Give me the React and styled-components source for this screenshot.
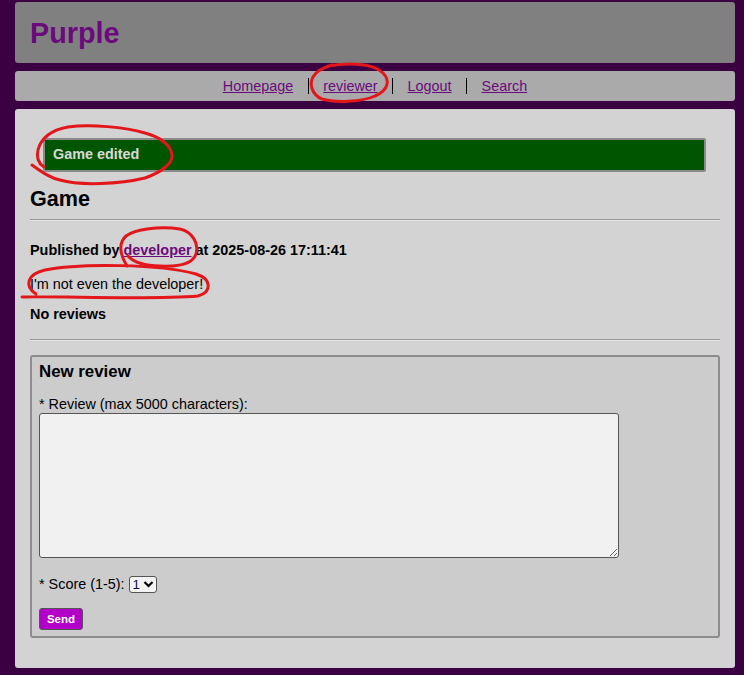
import React from "react";
import styled, { createGlobalStyle } from "styled-components";

const Global = createGlobalStyle`
  html, body { margin: 0; padding: 0; background: #3a0042; }
  body { font-family: "Liberation Sans", Arial, sans-serif; font-size: 14.4px; color: #000; }
  * { box-sizing: border-box; }
`;

const Page = styled.div`
  position: relative;
  min-height: 675px;
  padding: 2px 9px 8px 15px;
  display: flex;
  flex-direction: column;
  gap: 8px;
`;

const Header = styled.header`
  background: #808080;
  border-radius: 3px;
  padding: 15px 15px 13px;
`;

const Brand = styled.h1`
  margin: 0;
  font-size: 28.8px;
  font-weight: bold;
  color: #6b0a7d;
  line-height: normal;
`;

const Nav = styled.nav`
  background: #aaaaaa;
  border-radius: 3px;
  height: 30px;
  display: flex;
  align-items: center;
  justify-content: center;
`;

const NavItem = styled.a`
  font-size: 14.4px;
  color: #6b0a7d;
  text-decoration: underline;
  padding: 0 14.5px;
  line-height: 16.5px;
  border-left: ${(p) => (p.$first ? "none" : "1px solid #000")};
`;

const Main = styled.main`
  background: #d3d3d3;
  border-radius: 3px;
  padding: 15px;
  display: flex;
  flex-direction: column;
`;

const Flash = styled.div`
  margin: 14px 14px 0 13px;
  background: #005500;
  border: 2px solid #8a8a8a;
  border-radius: 2px;
  padding: 6px 8px 7px;
  color: #d9d9d9;
  font-weight: bold;
  font-size: 14.4px;
  line-height: 16.5px;
`;

const Title = styled.h2`
  margin: 14px 0 0;
  font-size: 21.6px;
  font-weight: bold;
  line-height: normal;
`;

const Rule = styled.hr`
  margin: ${(p) => p.$top}px 0 0;
  border: 0;
  border-top: 1px solid #9a9a9a;
  border-bottom: 1px solid #e2e2e2;
  height: 0;
`;

const Para = styled.p`
  margin: ${(p) => p.$top}px 0 0;
  font-weight: ${(p) => (p.$bold ? "bold" : "normal")};
  font-size: 14.4px;
  line-height: 16.5px;
`;

const UserLink = styled.a`
  color: #6b0a7d;
  text-decoration: underline;
`;

const Fieldset = styled.form`
  margin: 14px 0 15px;
  background: #cccccc;
  border: 2px solid #8c8c8c;
  border-radius: 3px;
  padding: 5px 7px 6px;
  display: flex;
  flex-direction: column;
  align-items: flex-start;
`;

const FormTitle = styled.h3`
  margin: 0;
  font-size: 16.85px;
  font-weight: bold;
  line-height: 19.4px;
`;

const Label = styled.label`
  margin-top: 15px;
  font-size: 14.4px;
  line-height: 16.5px;
  height: 17px;
`;

const TextArea = styled.textarea`
  width: 580px;
  height: 145px;
  background: #f1f1f1;
  border: 1px solid #555;
  border-radius: 3px;
  font-family: inherit;
  margin: 0;
  display: block;
`;

const ScoreRow = styled.div`
  margin-top: 18px;
  display: flex;
  align-items: center;
  gap: 4px;
  font-size: 14.4px;
  height: 17px;
`;

const SelectBox = styled.span`
  display: inline-flex;
  align-items: center;
  height: 17px;
  width: 28px;
  border: 1px solid #555;
  border-radius: 3px;
  background: #f3f3f3;
  padding: 0 2px 0 3px;
  gap: 1px;
`;

const Select = styled.select`
  appearance: none;
  border: 0;
  background: transparent;
  padding: 0;
  margin: 0;
  font-family: inherit;
  font-size: 13.3px;
  color: #0a0a50;
  width: 9px;
  outline: none;
`;

const SendButton = styled.button`
  margin-top: 15px;
  width: 44px;
  height: 22px;
  background: #b300c8;
  color: #fff;
  font-family: inherit;
  font-weight: bold;
  font-size: 11.5px;
  border: 1px solid #555;
  border-radius: 3px;
  padding: 0;
`;

const Marks = styled.svg`
  position: absolute;
  left: 0;
  top: 0;
  pointer-events: none;
`;

export default function App() {
  return (
    <>
      <Global />
      <Page>
        <Header>
          <Brand>Purple</Brand>
        </Header>
        <Nav>
          <NavItem $first href="#">Homepage</NavItem>
          <NavItem href="#">reviewer</NavItem>
          <NavItem href="#">Logout</NavItem>
          <NavItem href="#">Search</NavItem>
        </Nav>
        <Main>
          <Flash>Game edited</Flash>
          <Title>Game</Title>
          <Rule $top={7} />
          <Para $bold $top={21}>
            Published by <UserLink href="#">developer</UserLink> at 2025-08-26 17:11:41
          </Para>
          <Para $top={18}>I'm not even the developer!</Para>
          <Para $bold $top={13.5}>No reviews</Para>
          <Rule $top={16} />
          <Fieldset onSubmit={(e) => e.preventDefault()}>
            <FormTitle>New review</FormTitle>
            <Label htmlFor="review">* Review (max 5000 characters):</Label>
            <TextArea id="review" />
            <ScoreRow>
              <span>* Score (1-5):</span>
              <SelectBox>
                <Select defaultValue="1">
                  <option>1</option>
                  <option>2</option>
                  <option>3</option>
                  <option>4</option>
                  <option>5</option>
                </Select>
                <svg width="11" height="8" viewBox="0 0 11 8">
                  <path d="M1.5 2 L5.5 6 L9.5 2" fill="none" stroke="#000" strokeWidth="2.2" strokeLinejoin="miter" />
                </svg>
              </SelectBox>
            </ScoreRow>
            <SendButton type="submit">Send</SendButton>
          </Fieldset>
        </Main>
        <Marks width="744" height="675" viewBox="0 0 744 675">
          <g fill="none" stroke="#e3161c" strokeWidth="3" strokeLinecap="round" strokeLinejoin="round">
            <path d="M328 66 C345 63 372 62 383 73 C390 80 389 90 375 96 C362 102 335 103 322 99 C312 95 309 84 313 77 C316 71 322 68 332 65" />
            <path d="M32 165 C42 172 50 178 60 180 C80 186 120 184 145 178 C162 172 173 163 172 155 C171 145 160 137 145 133 C125 127 90 124 68 127 C52 130 41 138 38 150 C36 158 38 163 44 167" />
            <path d="M127 266 C120 255 118 243 126 236 C135 229 160 226 180 229 C193 232 199 244 196 254 C193 263 180 267 160 266 C145 266 133 262 128 256" />
            <path d="M22 297 C60 296 150 300 198 296 C212 292 212 279 196 274 C160 264 80 263 45 270 C27 274 24 286 36 294" />
          </g>
        </Marks>
      </Page>
    </>
  );
}
